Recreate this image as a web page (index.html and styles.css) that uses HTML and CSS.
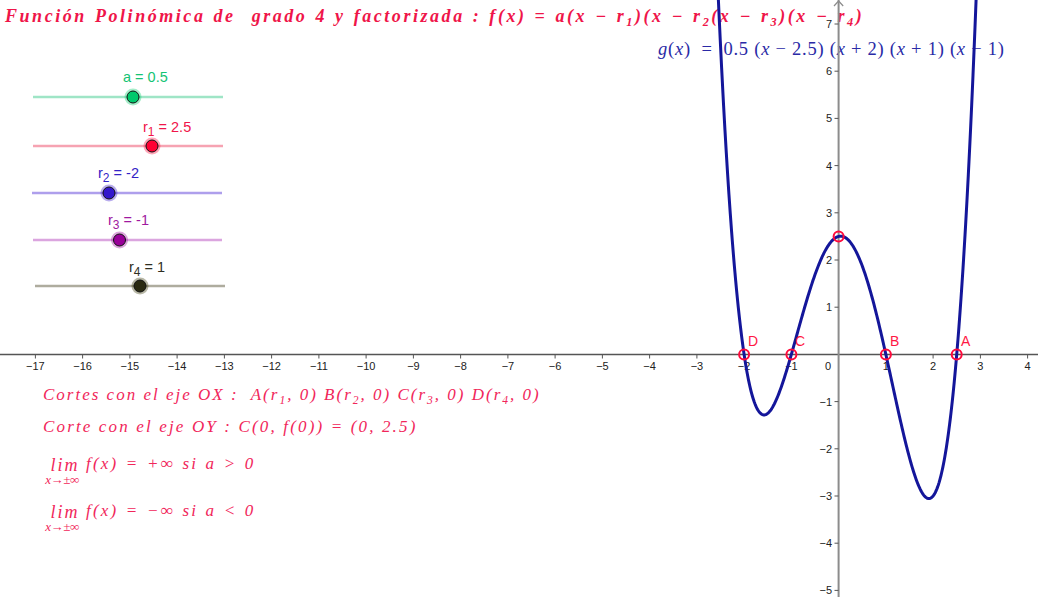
FILE: index.html
```html
<!DOCTYPE html>
<html lang="es">
<head>
<meta charset="utf-8">
<title>Función Polinómica de grado 4</title>
<link rel="stylesheet" href="styles.css">
</head>
<body>
<main class="canvas">
  <p class="note title">Función Polinómica de&nbsp; grado 4 y factorizada : f(x) = a(x − r<sub>1</sub>)(x − r<sub>2</sub>(x − r<sub>3</sub>)(x − r<sub>4</sub>)</p>
  <p class="note gx"><i>g</i>(<i>x</i>) &nbsp;= &nbsp;0.5 (<i>x</i> − 2.5) (<i>x</i> + 2) (<i>x</i> + 1) (<i>x</i> − 1)</p>
  <p class="note cuts cuts-x">Cortes con el eje OX :&nbsp; A(r<sub>1</sub>, 0) B(r<sub>2</sub>, 0) C(r<sub>3</sub>, 0) D(r<sub>4</sub>, 0)</p>
  <p class="note cuts cuts-y">Corte con el eje OY : C(0, f(0)) = (0, 2.5)</p>
  <div class="note limit lim-pos">
    <span class="lim"><span class="lim-word">lim</span><span class="lim-sub">x→±∞</span></span>
    <span class="lim-expr">f(x) = +∞ si a &gt; 0</span>
  </div>
  <div class="note limit lim-neg">
    <span class="lim"><span class="lim-word">lim</span><span class="lim-sub">x→±∞</span></span>
    <span class="lim-expr">f(x) = −∞ si a &lt; 0</span>
  </div>

  <svg class="plot" width="1038" height="597" viewBox="0 0 1038 597" xmlns="http://www.w3.org/2000/svg">
    <!-- sliders -->
    <g class="slider">
      <line x1="33" y1="97" x2="223" y2="97" stroke="#9fe5c6" stroke-width="2.5"/>
      <circle cx="133" cy="97" r="8.5" fill="#00cc66" fill-opacity="0.35"/>
      <circle cx="133" cy="97" r="6" fill="#00c96c" stroke="#111" stroke-width="1"/>
      <text x="123" y="82" class="slabel" fill="#14c374">a = 0.5</text>
    </g>
    <g class="slider">
      <line x1="33" y1="146" x2="223" y2="146" stroke="#f6a3b2" stroke-width="2.5"/>
      <circle cx="152" cy="146" r="8.5" fill="#ff0033" fill-opacity="0.35"/>
      <circle cx="152" cy="146" r="6" fill="#ff0033" stroke="#111" stroke-width="1"/>
      <text x="143" y="131.5" class="slabel" fill="#f0154a">r<tspan class="ssub" dy="4">1</tspan><tspan dy="-4"> = 2.5</tspan></text>
    </g>
    <g class="slider">
      <line x1="32" y1="193" x2="222" y2="193" stroke="#ae9fec" stroke-width="2.5"/>
      <circle cx="109" cy="193" r="8.5" fill="#3311cc" fill-opacity="0.35"/>
      <circle cx="109" cy="193" r="6" fill="#3418cc" stroke="#111" stroke-width="1"/>
      <text x="98" y="178" class="slabel" fill="#3322c6">r<tspan class="ssub" dy="4">2</tspan><tspan dy="-4"> = -2</tspan></text>
    </g>
    <g class="slider">
      <line x1="33" y1="240" x2="222" y2="240" stroke="#dba5df" stroke-width="2.5"/>
      <circle cx="119.5" cy="240" r="8.5" fill="#990099" fill-opacity="0.35"/>
      <circle cx="119.5" cy="240" r="6" fill="#990099" stroke="#111" stroke-width="1"/>
      <text x="108" y="225" class="slabel" fill="#a0189f">r<tspan class="ssub" dy="4">3</tspan><tspan dy="-4"> = -1</tspan></text>
    </g>
    <g class="slider">
      <line x1="35" y1="286" x2="225" y2="286" stroke="#aeac9e" stroke-width="2.5"/>
      <circle cx="140" cy="286" r="8.5" fill="#333300" fill-opacity="0.35"/>
      <circle cx="140" cy="286" r="6" fill="#2a2a12" stroke="#111" stroke-width="1"/>
      <text x="129" y="271.5" class="slabel" fill="#2e2e22">r<tspan class="ssub" dy="4">4</tspan><tspan dy="-4"> = 1</tspan></text>
    </g>

    <!-- axes -->
    <line x1="0" y1="354.5" x2="1038" y2="354.5" stroke="#555" stroke-width="1.3"/>
    <line x1="838.6" y1="0" x2="838.6" y2="597" stroke="#8c8c8c" stroke-width="2"/>
    <path d="M834 6 L838.6 1 L843.2 6" fill="none" stroke="#8c8c8c" stroke-width="1.2"/>
    <path class="ticks" d="M35.4 354v4.5M82.6 354v4.5M129.9 354v4.5M177.1 354v4.5M224.4 354v4.5M271.6 354v4.5M318.9 354v4.5M366.1 354v4.5M413.4 354v4.5M460.6 354v4.5M507.9 354v4.5M555.1 354v4.5M602.4 354v4.5M649.6 354v4.5M696.9 354v4.5M744.1 354v4.5M791.4 354v4.5M885.9 354v4.5M933.1 354v4.5M980.4 354v4.5M1027.6 354v4.5M834.5 24h4M834.5 71.2h4M834.5 118.4h4M834.5 165.6h4M834.5 212.8h4M834.5 260h4M834.5 307.2h4M834.5 401.6h4M834.5 448.8h4M834.5 496h4M834.5 543.2h4M834.5 590.4h4" stroke="#555" stroke-width="1"/>
    <g class="xlabels">
      <text x="35.4" y="369.5">−17</text>
      <text x="82.6" y="369.5">−16</text>
      <text x="129.9" y="369.5">−15</text>
      <text x="177.1" y="369.5">−14</text>
      <text x="224.4" y="369.5">−13</text>
      <text x="271.6" y="369.5">−12</text>
      <text x="318.9" y="369.5">−11</text>
      <text x="366.1" y="369.5">−10</text>
      <text x="413.4" y="369.5">−9</text>
      <text x="460.6" y="369.5">−8</text>
      <text x="507.9" y="369.5">−7</text>
      <text x="555.1" y="369.5">−6</text>
      <text x="602.4" y="369.5">−5</text>
      <text x="649.6" y="369.5">−4</text>
      <text x="696.9" y="369.5">−3</text>
      <text x="744.1" y="369.5">−2</text>
      <text x="791.4" y="369.5">−1</text>
      <text x="828" y="369.5">0</text>
      <text x="885.9" y="369.5">1</text>
      <text x="933.1" y="369.5">2</text>
      <text x="980.4" y="369.5">3</text>
      <text x="1027.6" y="369.5">4</text>
    </g>
    <g class="ylabels">
      <text x="832" y="28">7</text>
      <text x="832" y="75.2">6</text>
      <text x="832" y="122.4">5</text>
      <text x="832" y="169.6">4</text>
      <text x="832" y="216.8">3</text>
      <text x="832" y="264">2</text>
      <text x="832" y="311.2">1</text>
      <text x="832" y="405.6">−1</text>
      <text x="832" y="452.8">−2</text>
      <text x="832" y="500">−3</text>
      <text x="832" y="547.2">−4</text>
      <text x="832" y="594.4">−5</text>
    </g>

    <!-- graph of g -->
    <path id="curve" class="curve" d=""/>

    <!-- points -->
    <g class="pts">
      <circle cx="956.7" cy="354.4" r="5"/>
      <circle cx="885.9" cy="354.4" r="5"/>
      <circle cx="791.4" cy="354.4" r="5"/>
      <circle cx="744.1" cy="354.4" r="5"/>
      <circle cx="838.6" cy="236.4" r="5"/>
    </g>
    <g class="ptlabels">
      <text x="961" y="345.5">A</text>
      <text x="890" y="345.5">B</text>
      <text x="795" y="345.5">C</text>
      <text x="748" y="345.5">D</text>
    </g>
  </svg>
</main>
<script src="script.js"></script>
</body>
</html>
```

FILE: styles.css
```css
body {
  margin: 0;
  background: #ffffff;
}

.canvas {
  position: relative;
  width: 1038px;
  height: 597px;
  overflow: hidden;
  background: #ffffff;
  font-family: "Liberation Serif", "Times New Roman", serif;
}

.note {
  position: absolute;
  margin: 0;
  white-space: nowrap;
  line-height: 1;
  font-size: 17px;
  font-style: italic;
}

.note sub {
  font-size: 68%;
  vertical-align: -4px;
  line-height: 0;
}

.title {
  left: 5px;
  top: 7px;
  font-size: 18px;
  font-weight: bold;
  color: #ef1549;
  letter-spacing: 2.55px;
  word-spacing: 1px;
}

.gx {
  left: 658px;
  top: 40px;
  font-style: normal;
  color: #2a2aa6;
  font-size: 18.5px;
  letter-spacing: 0.75px;
}

.gx i {
  font-style: italic;
}

.cuts {
  left: 43px;
  color: #f1265a;
}

.cuts-x {
  top: 386px;
  letter-spacing: 2px;
}

.cuts-y {
  top: 418px;
  letter-spacing: 2.15px;
}

.limit {
  left: 41px;
  display: flex;
  align-items: flex-start;
  gap: 3px;
  color: #f1265a;
}

.lim-pos {
  top: 455px;
}

.lim-neg {
  top: 502px;
}

.lim {
  display: flex;
  flex-direction: column;
  align-items: center;
  width: 42px;
}

.lim-word {
  font-size: 18px;
  line-height: 15px;
  padding-top: 3px;
  letter-spacing: 2px;
  padding-left: 6px;
}

.lim-sub {
  font-size: 13px;
  line-height: 1;
  margin-top: 0;
  letter-spacing: -0.4px;
}

.lim-expr {
  letter-spacing: 2.2px;
  word-spacing: 1px;
}

.plot {
  position: absolute;
  left: 0;
  top: 0;
  pointer-events: none;
}

.slabel {
  font-family: "Liberation Sans", Arial, sans-serif;
  font-size: 14.5px;
}

.ssub {
  font-size: 12px;
}

.xlabels text {
  font-family: "Liberation Sans", Arial, sans-serif;
  font-size: 11px;
  fill: #222;
  text-anchor: middle;
}

.ylabels text {
  font-family: "Liberation Sans", Arial, sans-serif;
  font-size: 11px;
  fill: #222;
  text-anchor: end;
}

.curve {
  fill: none;
  stroke: #14169a;
  stroke-width: 3;
  stroke-linejoin: round;
}

.pts circle {
  fill: none;
  stroke: #ff0a3c;
  stroke-width: 2;
}

.ptlabels text {
  font-family: "Liberation Sans", Arial, sans-serif;
  font-size: 14px;
  fill: #ff1744;
}
```

FILE: script.js
```javascript
(function () {
  var path = document.getElementById('curve');
  var x0 = 838.6, sx = 47.25, y0 = 354.4, sy = 47.2;
  var d = '';
  var n = 400;
  for (var i = 0; i <= n; i++) {
    var x = -2.66 + i * (5.66 / n);
    var y = 0.5 * Math.pow(x, 4) - 0.25 * Math.pow(x, 3) - 3 * x * x + 0.25 * x + 2.5;
    var X = x0 + sx * x;
    var Y = y0 - sy * y;
    d += (i ? 'L' : 'M') + X.toFixed(2) + ' ' + Y.toFixed(2);
  }
  path.setAttribute('d', d);
})();
```
